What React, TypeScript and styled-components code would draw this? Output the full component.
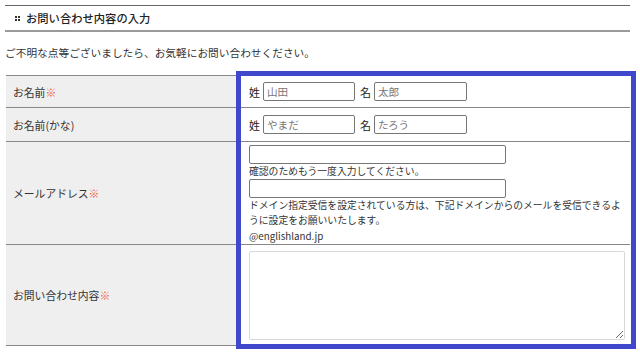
import React from "react";
import styled, { createGlobalStyle } from "styled-components";

const Global = createGlobalStyle`
  html, body { margin: 0; padding: 0; background: #fff; }
  body { font-family: "Noto Sans CJK JP", "Noto Sans", sans-serif; color: #333; }
  * { box-sizing: border-box; }
`;

const Page = styled.div`
  position: relative;
  width: 640px;
  height: 355px;
  padding: 5px 10px 0 6px;
  overflow: hidden;
`;

const Heading = styled.div`
  display: flex;
  align-items: center;
  gap: 6px;
  height: 27px;
  margin-left: -1px;
  padding-left: 10px;
  border-top: 1px solid #666;
  border-bottom: 2px solid #9a9a9a;
  font-size: 11.3px;
  font-weight: 500;
  color: #222;
`;

const Intro = styled.p`
  margin: 13px 0 0 -1px;
  font-size: 10.7px;
  line-height: 16px;
  height: 30px;
  color: #333;
`;

const Table = styled.div`
  display: grid;
  grid-template-columns: 230px 1fr;
  border-bottom: 1px solid #888;
`;

const Label = styled.div<{ $h: number }>`
  display: flex;
  align-items: center;
  height: ${(p) => p.$h}px;
  padding-left: 7px;
  background: #efefef;
  border-top: 1px solid #888;
  font-size: 10.8px;
  color: #333;
`;

const Field = styled.div<{ $h: number }>`
  height: ${(p) => p.$h}px;
  padding: 0 0 0 13px;
  border-top: 1px solid #888;
  display: flex;
  flex-direction: column;
  justify-content: center;
`;

const Req = styled.span`
  color: #f0603c;
`;

const NameRow = styled.div`
  display: flex;
  align-items: center;
  gap: 3px;
  font-size: 11px;
  color: #222;
`;

const Spacer = styled.span`
  width: 0px;
  margin-left: -1px;
`;

const TextInput = styled.input<{ $w: number }>`
  width: ${(p) => p.$w}px;
  height: 19px;
  padding: 0 3px;
  border: 1px solid #767676;
  border-radius: 2px;
  font-family: inherit;
  font-size: 10.6px;
  color: #555;
  background: #fff;
  &::placeholder { color: #777; }
`;

const Note = styled.div`
  font-size: 9.8px;
  line-height: 15.5px;
  color: #333;
  padding-right: 0;
`;

const EmailBox = styled.div`
  display: flex;
  flex-direction: column;
  justify-content: flex-start;
  padding-top: 3px;
  gap: 0;
`;

const TextArea = styled.textarea`
  width: 376px;
  height: 89px;
  border: 1px solid #d8d8d8;
  border-radius: 2px;
  resize: both;
  background: #fff;
`;

const Highlight = styled.div`
  position: absolute;
  left: 236px;
  top: 71px;
  width: 400px;
  height: 278px;
  border: 5px solid #3f48cc;
  pointer-events: none;
`;

const Dots = () => (
  <svg width="5" height="5" viewBox="0 0 5 5">
    <rect x="0" y="0" width="2" height="2" fill="#333" />
    <rect x="3" y="0" width="2" height="2" fill="#333" />
    <rect x="0" y="3" width="2" height="2" fill="#333" />
    <rect x="3" y="3" width="2" height="2" fill="#333" />
  </svg>
);

export default function App() {
  return (
    <>
      <Global />
      <Page>
        <Heading>
          <Dots />
          <span>お問い合わせ内容の入力</span>
        </Heading>
        <Intro>ご不明な点等ございましたら、お気軽にお問い合わせください。</Intro>
        <Table>
          <Label $h={32}>
            お名前<Req>※</Req>
          </Label>
          <Field $h={32}>
            <NameRow>
              姓<TextInput $w={92} placeholder="山田" />
              <Spacer />名<TextInput $w={93} placeholder="太郎" />
            </NameRow>
          </Field>
          <Label $h={34}>お名前(かな)</Label>
          <Field $h={34}>
            <NameRow>
              姓<TextInput $w={92} placeholder="やまだ" />
              <Spacer />名<TextInput $w={93} placeholder="たろう" />
            </NameRow>
          </Field>
          <Label $h={103}>
            メールアドレス<Req>※</Req>
          </Label>
          <Field $h={103} as={EmailBox}>
            <TextInput $w={257} />
            <Note>確認のためもう一度入力してください。</Note>
            <TextInput $w={257} />
            <Note>
              ドメイン指定受信を設定されている方は、下記ドメインからのメールを受信できるように設定をお願いいたします。
              <br />
              @englishland.jp
            </Note>
          </Field>
          <Label $h={101}>
            お問い合わせ内容<Req>※</Req>
          </Label>
          <Field $h={101}>
            <TextArea />
          </Field>
        </Table>
        <Highlight />
      </Page>
    </>
  );
}
